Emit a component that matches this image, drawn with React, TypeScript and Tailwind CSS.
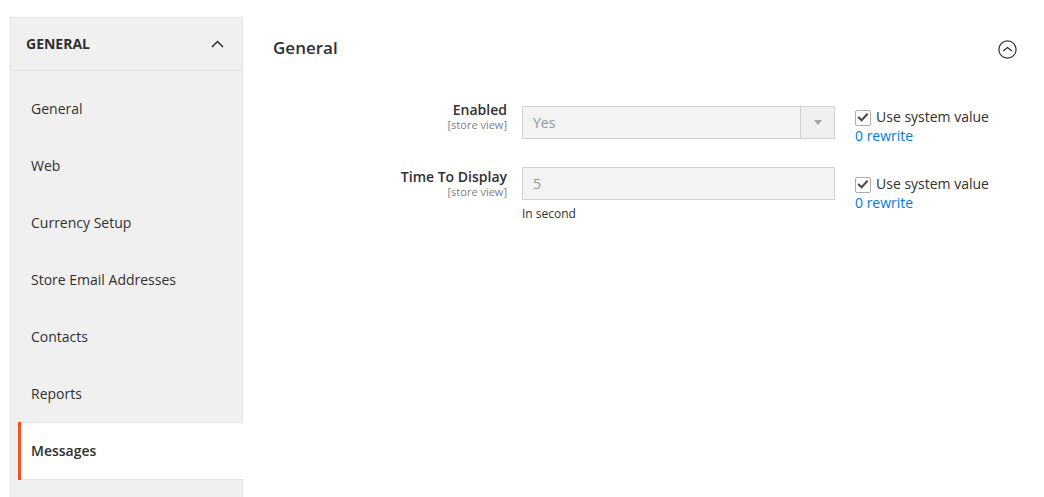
import { useId, useState, type ReactNode } from "react";

const navItems = [
  "General",
  "Web",
  "Currency Setup",
  "Store Email Addresses",
  "Contacts",
  "Reports",
  "Messages",
];

function Sidebar({ active }: { active: string }) {
  return (
    <aside className="w-[233px] shrink-0 border-t border-l border-[#e3e3e3] bg-[#f0f0f0] shadow-[inset_-1px_0_0_#e3e3e3]">
      <button
        type="button"
        aria-expanded="true"
        className="flex h-[53px] w-full items-center justify-between border-b border-[#e3e3e3] pr-[19px] pl-[15px] text-sm font-bold uppercase text-[#303030]"
      >
        General
        <svg width="13" height="8" viewBox="0 0 13 8" fill="none" stroke="#303030" strokeWidth="1.5" aria-hidden="true">
          <path d="M1 7 6.5 1.5 12 7" />
        </svg>
      </button>
      <nav aria-label="Configuration" className="pt-[9px] pl-[7px]">
        <ul>
          {navItems.map((item) => (
            <li
              key={item}
              className={
                item === active
                  ? "border-l-3 border-[#f4511e]"
                  : "border-l-3 border-transparent"
              }
            >
              <a
                href="#"
                aria-current={item === active ? "page" : undefined}
                className={
                  item === active
                    ? "flex h-[58px] items-center border-y border-[#e3e3e3] bg-white pb-0.5 pl-[10px] font-semibold"
                    : "flex h-[57px] items-center pl-[10px]"
                }
              >
                {item}
              </a>
            </li>
          ))}
        </ul>
      </nav>
    </aside>
  );
}

function SystemValue({ name }: { name: string }) {
  const [checked, setChecked] = useState(true);
  const id = useId();
  return (
    <div className="pt-[7px] whitespace-nowrap">
      <div className="flex items-center">
        <span className="relative mt-0.5 mr-[5px] flex size-4">
          <input
            id={id}
            type="checkbox"
            checked={checked}
            onChange={(e) => setChecked(e.target.checked)}
            className="peer size-4 appearance-none rounded-xs border border-[#adadad] bg-white"
          />
          <svg
            className="pointer-events-none absolute inset-0 hidden peer-checked:block"
            width="16"
            height="16"
            viewBox="0 0 16 16"
            aria-hidden="true"
          >
            <path d="M3.2 7 6.6 10.2 12.6 3.8" fill="none" stroke="#514943" strokeWidth="2.1" />
          </svg>
        </span>
        <label htmlFor={id}>Use system value</label>
      </div>
      <a href="#" aria-label={`0 rewrite, ${name}`} className="block w-fit text-[#007bdb]">
        0 rewrite
      </a>
    </div>
  );
}

function Field({ id, label, children }: { id: string; label: string; children: ReactNode }) {
  return (
    <div className="grid grid-cols-[249fr_333fr_162fr] items-start">
      <label htmlFor={id} className="pr-[15px] text-right">
        <span className="block font-semibold">{label}</span>
        <span className="block text-[11px] leading-3 text-[#808080]">[store view]</span>
      </label>
      <div className="pr-5">{children}</div>
      <SystemValue name={label} />
    </div>
  );
}

export default function App() {
  return (
    <div className="flex min-h-screen bg-white pt-[17px] pl-[10px] font-['Open_Sans',sans-serif] text-sm leading-[19px] text-[#303030]">
      <Sidebar active="Messages" />
      <main className="min-w-0 flex-1 pr-[27px] pl-[30px]">
        <div className="flex h-[64px] items-center justify-between">
          <h1 className="pb-[3px] text-[17px] font-semibold">General</h1>
          <button type="button" aria-label="Collapse section">
            <svg width="19" height="19" viewBox="0 0 19 19" fill="none" stroke="#303030" aria-hidden="true">
              <circle cx="9.5" cy="9.5" r="8.6" strokeWidth="1.2" />
              <path d="M5.2 11.1 9.5 7.5 13.8 11.1" strokeWidth="1.3" />
            </svg>
          </button>
        </div>
        <form className="flex flex-col gap-[22px] pt-[19px]">
          <Field id="enabled" label="Enabled">
            <div className="relative mt-[6px]">
              <select
                id="enabled"
                disabled
                className="block h-[33px] w-full appearance-none rounded-[1px] border border-[#d1d1d1] bg-[#f3f3f3] px-[10px] text-[#989898]"
              >
                <option>Yes</option>
                <option>No</option>
              </select>
              <span className="pointer-events-none absolute inset-y-0 right-0 flex w-[35px] items-center justify-center border border-[#d1d1d1] bg-[#f0f0f0]">
                <svg width="8" height="5" viewBox="0 0 8 5" aria-hidden="true">
                  <path d="M0 0h8L4 5z" fill="#a3a3a3" />
                </svg>
              </span>
            </div>
          </Field>
          <Field id="time" label="Time To Display">
            <input
              id="time"
              type="text"
              defaultValue="5"
              disabled
              className="block h-[33px] w-full rounded-[1px] border border-[#d1d1d1] bg-[#f3f3f3] px-[10px] text-[#989898]"
            />
            <p className="pt-1 text-xs leading-[19px]">In second</p>
          </Field>
        </form>
      </main>
    </div>
  );
}
